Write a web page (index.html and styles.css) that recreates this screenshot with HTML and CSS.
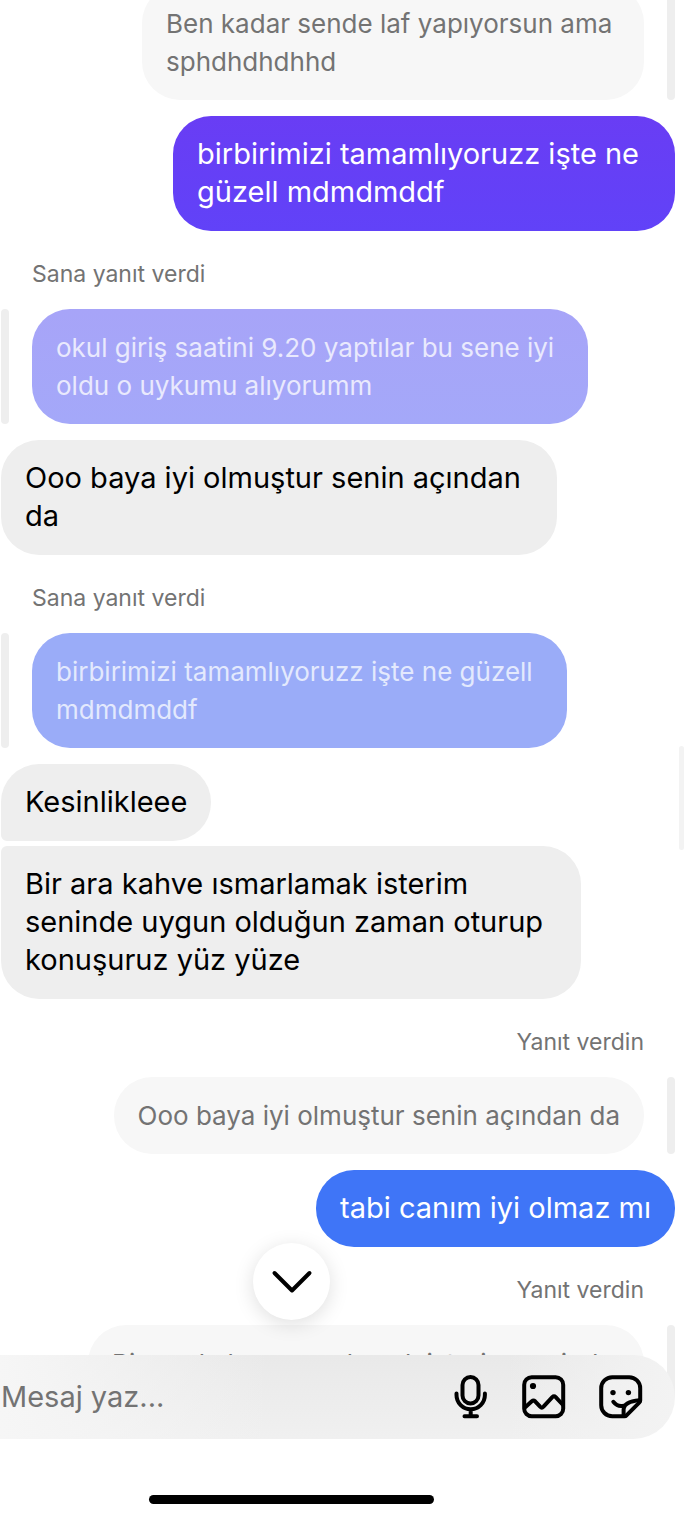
FILE: index.html
```html
<!DOCTYPE html>
<html lang="tr">
<head>
<meta charset="utf-8">
<meta name="viewport" content="width=device-width, initial-scale=1">
<title>Sohbet</title>
<link rel="stylesheet" href="styles.css">
</head>
<body>
<div class="app">
  <main class="chat">
    <div class="quote quote-out">
      <p class="bubble quoted narrow">Ben kadar sende laf yapıyorsun ama sphdhdhdhhd</p>
      <span class="quote-bar"></span>
    </div>
    <p class="bubble out violet narrow">birbirimizi tamamlıyoruzz işte ne güzell mdmdmddf</p>

    <p class="label">Sana yanıt verdi</p>
    <div class="quote">
      <span class="quote-bar"></span>
      <p class="bubble quoted quoted-violet">okul giriş saatini 9.20 yaptılar bu sene iyi oldu o uykumu alıyorumm</p>
    </div>
    <p class="bubble in">Ooo baya iyi olmuştur senin açından da</p>

    <p class="label">Sana yanıt verdi</p>
    <div class="quote">
      <span class="quote-bar"></span>
      <p class="bubble quoted quoted-blue medium">birbirimizi tamamlıyoruzz işte ne güzell mdmdmddf</p>
    </div>
    <p class="bubble in group-start">Kesinlikleee</p>
    <p class="bubble in group-end wide">Bir ara kahve ısmarlamak isterim seninde uygun olduğun zaman oturup konuşuruz yüz yüze</p>

    <p class="label label-out">Yanıt verdin</p>
    <div class="quote quote-out">
      <p class="bubble quoted">Ooo baya iyi olmuştur senin açından da</p>
      <span class="quote-bar"></span>
    </div>
    <p class="bubble out blue">tabi canım iyi olmaz mı</p>

    <p class="label label-out">Yanıt verdin</p>
    <div class="quote quote-out">
      <p class="bubble quoted">Bir ara kahve ısmarlamak isterim seninde uygun olduğun zaman oturup konuşuruz yüz yüze</p>
      <span class="quote-bar"></span>
    </div>
    <span class="scroll-thumb"></span>
  </main>

  <footer class="footer">
    <button class="jump" type="button" aria-label="En alta git">
      <svg width="44" height="24" viewBox="0 0 44 24"><path d="M4.500 3 22 20.500 39.500 3"/></svg>
    </button>
    <form class="composer">
      <input class="message" type="text" placeholder="Mesaj yaz..." aria-label="Mesaj yaz">
      <button class="tool" type="button" aria-label="Ses kaydı">
        <svg width="36" height="44" viewBox="0 0 36 44"><rect x="9.500" y="2" width="16" height="26.500" rx="8"/><path d="M3.500 18.500v1.500a14.200 14.200 0 0 0 28.400 0v-1.500M17.700 34.500v6.500M11.500 41.300h12.500"/></svg>
      </button>
      <button class="tool" type="button" aria-label="Fotoğraf">
        <svg width="44" height="44" viewBox="0 0 44 44"><rect x="2.200" y="2.200" width="39" height="39" rx="7.500"/><path d="M3.500 32 9.800 26.300q1.700-1.500 3.300 0l5 5.400q1.700 1.700 3.400 0l8.800-9.600q1.700-1.700 3.400 0L41 30"/><circle class="dot" cx="11" cy="11" r="3.100"/></svg>
      </button>
      <button class="tool" type="button" aria-label="Çıkartma">
        <svg width="44" height="44" viewBox="0 0 44 44"><path d="M25.500 41.200H13.200a11 11 0 0 1-11-11v-17a11 11 0 0 1 11-11h17a11 11 0 0 1 11 11v12.300q0 1.200-1 2.200L27.500 40.300q-.8.900-2 .9Z"/><path d="M24.600 40.500V34.500Q25 26.500 40.500 25.200M14.300 26.800q4.500 5.600 10.500 3.900"/><circle class="dot" cx="14" cy="17.600" r="2.700"/><circle class="dot" cx="29.400" cy="17.600" r="2.700"/></svg>
      </button>
    </form>
    <div class="home"><span class="home-bar"></span></div>
  </footer>
</div>
</body>
</html>
```
FILE: styles.css
```css
* { box-sizing: border-box; }

body {
  margin: 0;
  background: #fff;
  font-family: Inter, "Noto Sans", "Liberation Sans", sans-serif;
  font-size: 29px;
  line-height: 38px;
  color: #000;
}

p { margin: 0; }

button {
  padding: 0;
  border: 0;
  background: none;
}

svg {
  display: block;
  fill: none;
  stroke: #000;
  stroke-width: 4;
  stroke-linecap: round;
  stroke-linejoin: round;
}

.dot { fill: #000; stroke: none; }

.app {
  display: flex;
  flex-direction: column;
  height: 100vh;
}

/* Message list; it runs on behind the composer's rounded corner */
.chat {
  position: relative;
  flex: 1;
  min-height: 0;
  overflow: hidden;
  display: flex;
  flex-direction: column;
  align-items: flex-start;
  padding: 0 15px 0 1px;
}

.chat > :first-child { margin-top: -15px; }
.chat > * { flex-shrink: 0; }

.bubble {
  max-width: 556px;
  padding: 19px 24px 20px;
  border-radius: 38px;
}

.narrow { max-width: 502px; }
.medium { max-width: 535px; }
.wide { max-width: 580px; }

.in { background: #eee; }
.out { align-self: flex-end; color: #fff; }
.violet { background: linear-gradient(#693df4, #6142f8); }
.blue { background: #3f75f7; }

.group-start { border-bottom-left-radius: 6px; }
.group-end { margin-top: 5px; border-top-left-radius: 6px; }

.label {
  padding: 28px 31px 20px;
  font-size: 23px;
  line-height: 30px;
  color: #737373;
}

.label-out { align-self: flex-end; }

.quote {
  display: flex;
  gap: 23px;
  margin-bottom: 16px;
}

.quote-out { align-self: flex-end; }

.quote-bar {
  width: 8px;
  border-radius: 4px;
  background: #eee;
}

.quoted {
  padding: 20px 24px 19px;
  background: #f7f7f7;
  color: #737373;
  font-size: 26px;
}

.quoted-violet {
  background: linear-gradient(#a7a4f8, #a4a8f9);
  color: #e9e9fd;
}

.quoted-blue {
  background: #9aacf8;
  color: #e3e9fd;
}

.scroll-thumb {
  position: absolute;
  top: 746px;
  right: 6px;
  width: 5px;
  height: 104px;
  border-radius: 3px;
  background: #f3f3f3;
}

.footer {
  position: relative;
  margin-top: -42px;
}

.composer {
  display: flex;
  align-items: center;
  gap: 33px;
  height: 84px;
  margin-right: 15px;
  padding: 0 32px 0 1px;
  border-radius: 0 42px 42px 0;
  background:
    linear-gradient(90deg, #f6f6f6, rgba(246, 246, 246, 0) 40%, rgba(246, 246, 246, 0) 75%, #f3f3f3),
    linear-gradient(#e9e9e9, #f0f0f0);
}

.message {
  flex: 1;
  min-width: 0;
  padding: 0;
  border: 0;
  outline: 0;
  background: none;
  font: inherit;
  color: #000;
}

.message::placeholder { color: #737373; opacity: 1; }

.jump {
  position: absolute;
  top: -112px;
  left: 253px;
  display: grid;
  place-items: center;
  width: 77px;
  height: 77px;
  border-radius: 50%;
  background: #fff;
  box-shadow: 0 4px 20px rgba(0, 0, 0, 0.13);
}

.home {
  display: flex;
  justify-content: center;
  padding: 56px 107px 16px 0;
}

.home-bar {
  width: 285px;
  height: 9px;
  border-radius: 5px;
  background: #000;
}
```
